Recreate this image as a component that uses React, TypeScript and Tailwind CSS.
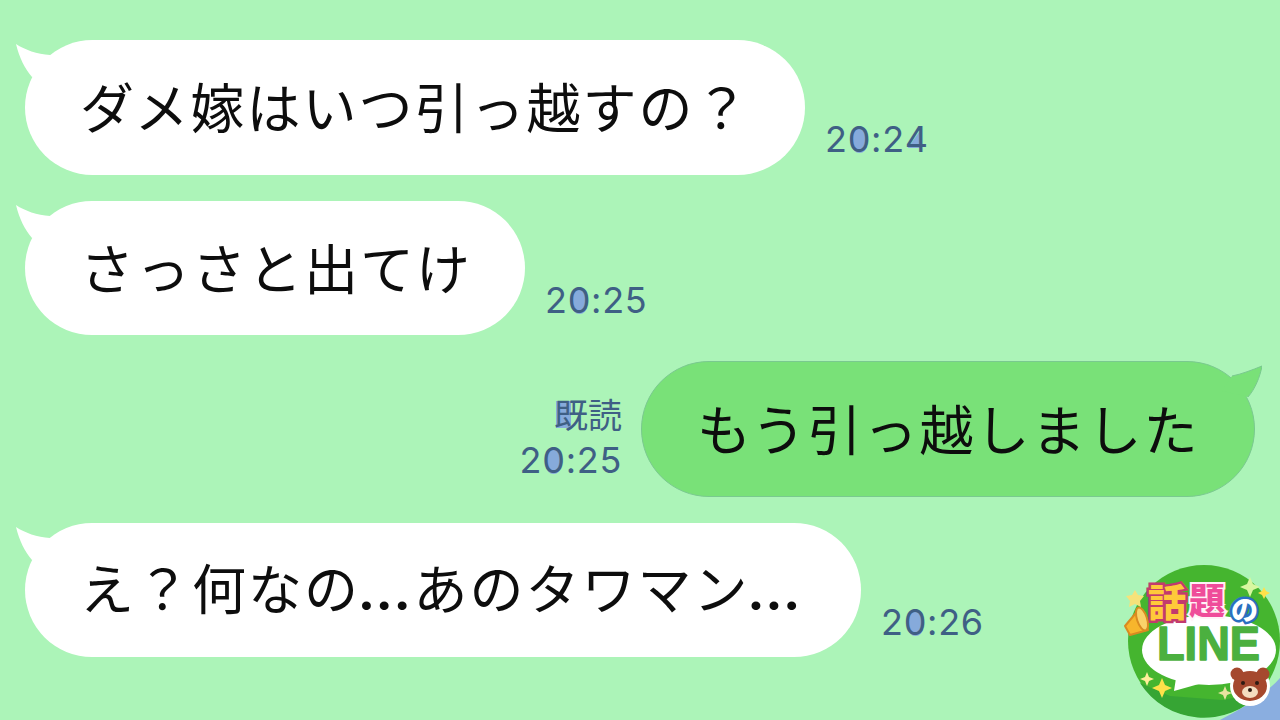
import type { ReactNode } from 'react';

const messageText = "relative whitespace-nowrap pb-[3px] text-[54px] leading-none tracking-[2px] text-[#0d0d0d] font-['Noto_Sans_CJK_JP',sans-serif]";

function TailLeft() {
  return (
    <svg className="absolute left-[-10px] top-[-1px]" width="70" height="50" viewBox="0 0 70 50">
      <path d="M1 5 C10 11 22 15 35 16 L50 30 L17 38 C10 30 4 18 1 5 Z" fill="#ffffff" />
    </svg>
  );
}

function TailRight() {
  return (
    <svg className="absolute right-[-8px] top-[-1px]" width="70" height="50" viewBox="0 0 70 50">
      <path d="M70 5 C60 9 50 13 40 15 L30 30 L56 36 C63 28 68 16 70 5 Z" fill="#79e178" />
      <path d="M40 15 C50 13 60 9 70 5 C68 16 63 28 56 36" fill="none" stroke="#79c98f" strokeWidth="1" />
    </svg>
  );
}

// the picture has the counters of some digits filled in blue
function Time({ value }: { value: string }) {
  return (
    <span className="isolate inline-flex text-[36px] leading-[44px] tracking-[0.7px] text-[#3f5f85] font-['Inter',sans-serif]">
      {value.split('').map((ch, i) => (
        <span key={i} className="relative">
          {ch === '0' && i === 1 && <span className="absolute left-[4px] top-[10px] -z-10 h-[26px] w-[15px] rounded-full bg-[#86aadb]" />}
          {ch === '4' && <span className="absolute left-[3px] top-[11px] -z-10 h-[20px] w-[14px] bg-[#86aadb] [clip-path:polygon(100%_0,100%_100%,0_100%)]" />}
          {ch}
        </span>
      ))}
    </span>
  );
}

function Incoming({ children, time, bubble }: { children: ReactNode; time: string; bubble: string }) {
  return (
    <div className="flex items-start pl-[25px]">
      <div className={`relative flex items-center rounded-[68px] bg-white pl-[55px] ${bubble}`}>
        <TailLeft />
        <span className={messageText}>{children}</span>
      </div>
      <div className="ml-[20px] mt-[77px]">
        <Time value={time} />
      </div>
    </div>
  );
}

function Dots() {
  return <span className="font-['Lato',sans-serif] font-black tracking-[5px]">...</span>;
}

function Logo() {
  return (
    <svg className="absolute bottom-0 right-0" width="170" height="170" viewBox="0 0 170 170">
      <path d="M170 128 L170 170 L110 170 C130 160 155 145 170 128 Z" fill="#8aaee0" />
      <circle cx="94" cy="91" r="76" fill="#45b52f" />
      <path d="M30 133 A76 76 0 0 0 150 143 L112 150 L60 146 Z" fill="#36a534" />
      <ellipse cx="99" cy="100" rx="67" ry="35" fill="#ffffff" />
      <path d="M66 128 L64 141 L96 132 Z" fill="#ffffff" />
      <text x="47" y="110" fontFamily="'Liberation Sans', sans-serif" fontWeight="700" fontSize="48" textLength="103" lengthAdjust="spacingAndGlyphs" fill="#4bb03f" stroke="#4bb03f" strokeWidth="1.5" strokeLinejoin="round">LINE</text>
      <text x="38" y="66" fontFamily="'Noto Sans CJK JP', sans-serif" fontWeight="900" fontSize="38" fill="#ffc93a" stroke="#c23a6e" strokeWidth="5" paintOrder="stroke">話</text>
      <text x="79" y="64" fontFamily="'Noto Sans CJK JP', sans-serif" fontWeight="900" fontSize="36" fill="#ef4c9a" stroke="#fff2f7" strokeWidth="4" paintOrder="stroke">題</text>
      <text x="121" y="70" fontFamily="'Noto Sans CJK JP', sans-serif" fontWeight="900" fontSize="27" fill="#ffffff" stroke="#2a6fc0" strokeWidth="5" paintOrder="stroke">の</text>
      <path d="M15 76 L30 58 L38 80 L20 85 Z" fill="#f7b52c" stroke="#d98a20" strokeWidth="2" strokeLinejoin="round" />
      <ellipse cx="32" cy="69" rx="5" ry="12" fill="#f9d26a" stroke="#d98a20" strokeWidth="2" transform="rotate(-18 32 69)" />
      <circle cx="140" cy="136" r="20" fill="#ffffff" />
      <circle cx="127" cy="124" r="6.5" fill="#a5482e" />
      <circle cx="153" cy="124" r="6.5" fill="#a5482e" />
      <ellipse cx="140" cy="136" rx="17" ry="15" fill="#a5482e" />
      <ellipse cx="140" cy="142" rx="8" ry="6" fill="#f3dcc0" />
      <circle cx="133" cy="133" r="2" fill="#2e1a12" />
      <circle cx="147" cy="133" r="2" fill="#2e1a12" />
      <circle cx="140" cy="140" r="2" fill="#2e1a12" />
      <path d="M52 128 L55 135 L62 138 L55 141 L52 148 L49 141 L42 138 L49 135 Z" fill="#ffe14a" />
      <path d="M37 122 L39 127 L44 129 L39 131 L37 136 L35 131 L30 129 L35 127 Z" fill="#ffef9a" />
      <path d="M140 27 L143 34 L150 37 L143 40 L140 47 L137 40 L130 37 L137 34 Z" fill="#d8f7a0" />
      <path d="M154 37 L156 41 L160 43 L156 45 L154 49 L152 45 L148 43 L152 41 Z" fill="#ffe14a" />
      <path d="M25 40 L28 45 L34 46 L30 51 L31 57 L25 54 L19 57 L20 51 L16 46 L22 45 Z" fill="#f6e27a" />
      <path d="M115 136 L117 141 L122 143 L117 145 L115 150 L113 145 L108 143 L113 141 Z" fill="#e8e3a0" />
    </svg>
  );
}

export default function App() {
  return (
    <div className="relative flex h-[720px] w-[1280px] flex-col gap-[26px] overflow-hidden bg-[#acf4b8] pt-[40px]">
      <Incoming time="20:24" bubble="h-[135px] w-[780px]">ダメ嫁はいつ引っ越すの？</Incoming>
      <Incoming time="20:25" bubble="h-[134px] w-[500px]">さっさと出てけ</Incoming>
      <div className="flex items-start justify-end pr-[25px]">
        <div className="mr-[19px] mt-[31px] flex flex-col items-end">
          <span className="relative isolate text-[34px] leading-[44px] text-[#3f5f85] font-['Noto_Sans_CJK_JP',sans-serif]">
            <span className="absolute left-[2px] top-[9px] -z-10 h-[27px] w-[15px] bg-[#86aadb]" />
            既読
          </span>
          <div className="mt-[2px]">
            <Time value="20:25" />
          </div>
        </div>
        <div className="relative flex h-[136px] w-[614px] items-center rounded-[68px] border border-[#79c98f] bg-[#79e178] pl-[55px]">
          <TailRight />
          <span className={messageText}>もう引っ越しました</span>
        </div>
      </div>
      <Incoming time="20:26" bubble="h-[134px] w-[836px]">
        え？何なの<Dots />あのタワマン<Dots />
      </Incoming>
      <Logo />
    </div>
  );
}
